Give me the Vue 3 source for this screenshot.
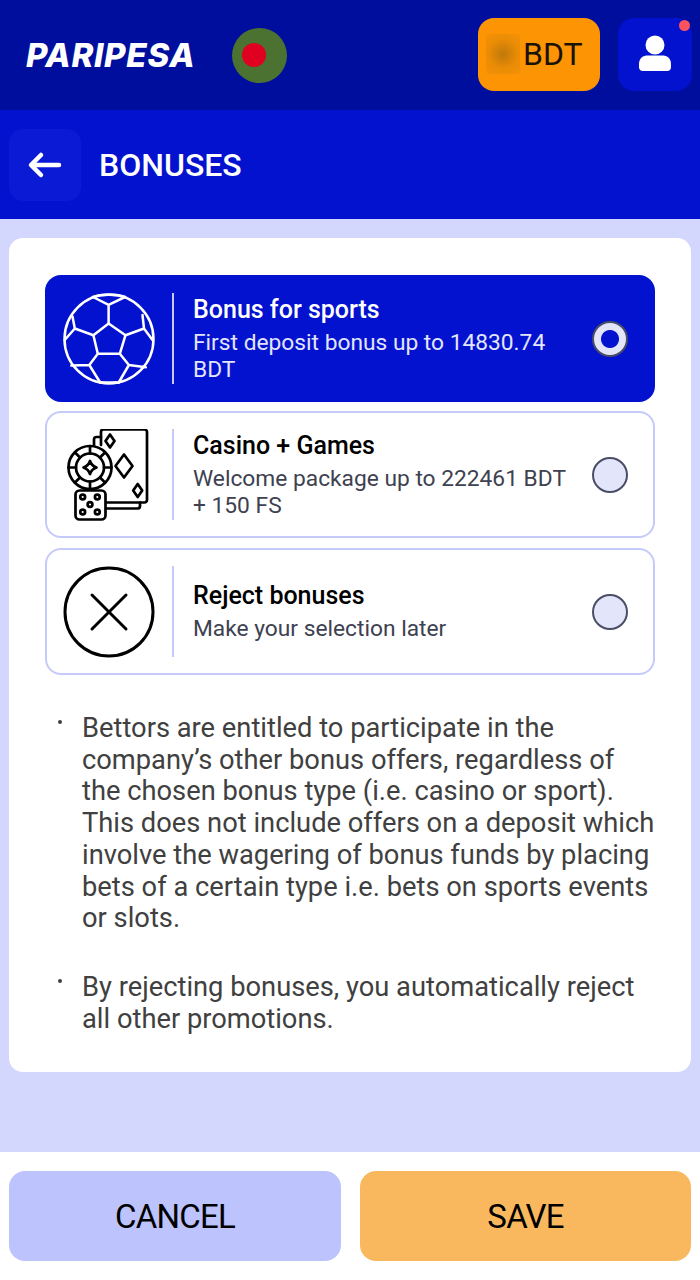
<template>
  <div class="page">
    <header class="topbar">
      <div class="brand">
        <span class="logo">PARIPESA</span>
        <span class="flag"><span class="flag-dot"></span></span>
      </div>
      <div class="top-actions">
        <button class="balance"><span class="blur"></span>BDT</button>
        <button class="user">
          <svg width="34" height="38" viewBox="0 0 34 38">
            <circle cx="17" cy="10" r="9.500" fill="#fff" />
            <path d="M1 29c0-6 4-8.500 9-8.500h14c5 0 9 2.500 9 8.500v3c0 2-1 4-4 4H5c-3 0-4-2-4-4z" fill="#fff" />
          </svg>
          <span class="notify"></span>
        </button>
      </div>
    </header>

    <div class="subbar">
      <button class="back">
        <svg width="38" height="28" viewBox="0 0 38 28" fill="none" stroke="#fff" stroke-width="4.500" stroke-linecap="round" stroke-linejoin="round">
          <path d="M33 14H6M15 4 5 14l10 10" />
        </svg>
      </button>
      <h1>BONUSES</h1>
    </div>

    <main class="content">
      <section class="card">
        <div class="options">
          <div
            v-for="option in options"
            :key="option.title"
            class="option"
            :class="{ active: option.active }"
          >
            <div class="option-icon">
              <svg v-if="option.icon === 'ball'" width="92" height="92" viewBox="0 0 92 92" fill="none" stroke="#fff" stroke-width="2.500" stroke-linejoin="round" stroke-linecap="round">
                <circle cx="46" cy="46" r="44.500" />
                <path d="M45.600 30.400 62.500 42.200 56.800 60.800H34.800L30.400 42.200Z" />
                <path d="M45.600 30.400V11.800M45.600 11.800 30 4M45.600 11.800 62 4" />
                <path d="M62.500 42.200 81 35.500M81 35.500 79.500 22M81 35.500 89.500 47" />
                <path d="M30.400 42.200 11.800 35.500M11.800 35.500 9.500 23.600M11.800 35.500 1.700 47" />
                <path d="M34.800 60.800 26.300 72M26.300 72 37.200 89.500M26.300 72 8.400 72.600" />
                <path d="M56.800 60.800 65.900 72M65.900 72 55.700 89.500M65.900 72 82.800 74.300" />
                <path d="M37.200 89.500H55.700M30 4C38 1 54 1 62 4" />
              </svg>
              <svg v-else-if="option.icon === 'casino'" width="92" height="92" viewBox="0 0 92 92" fill="none" stroke="#000" stroke-width="2.700" stroke-linejoin="round" stroke-linecap="round">
                <path d="M38 16V3a2.500 2.500 0 0 1 2.500-2.500h41a2.500 2.500 0 0 1 2.500 2.500v68a2.500 2.500 0 0 1-2.500 2.500H44" />
                <path d="M38 8h-4.500a2.500 2.500 0 0 0-2.500 2.500V17" />
                <path d="M44 79.500h30.500A2.500 2.500 0 0 0 77 77v-3.500" />
                <path d="M47 5.500l4.500 6.500-4.500 6.500-4.500-6.500zM74.700 55l4.500 6.500-4.500 6.500-4.500-6.500zM61 25.500l8.500 11.500-8.500 11.500-8.500-11.500z" />
                <circle cx="27" cy="38.500" r="21.500" />
                <circle cx="27" cy="38.500" r="14" />
                <path d="M27 17v7.500M27 52.500V60M5.500 38.500H13M41 38.500h7.500M12 23.500l5 5M42 23.500l-5 5M12 53.500l5-5M42 53.500l-5-5" />
                <path d="M27 32c1 3 3.500 5.500 6.500 6.500-3 1-5.500 3.500-6.500 6.500-1-3-3.500-5.500-6.500-6.500 3-1 5.500-3.500 6.500-6.500z" />
                <rect x="12.500" y="61.500" width="30" height="29" rx="4" fill="#fff" />
                <circle cx="19.700" cy="68" r="2.400" />
                <circle cx="34.300" cy="68" r="2.400" />
                <circle cx="27" cy="75.500" r="2.400" />
                <circle cx="19.700" cy="83" r="2.400" />
                <circle cx="34.300" cy="83" r="2.400" />
              </svg>
              <svg v-else width="92" height="92" viewBox="0 0 92 92" fill="none" stroke="#000" stroke-linecap="round">
                <circle cx="46" cy="46" r="44" stroke-width="3" />
                <path d="M29 29 63 63M63 29 29 63" stroke-width="3" />
              </svg>
            </div>
            <div class="option-text">
              <h2>{{ option.title }}</h2>
              <p>{{ option.text }}</p>
            </div>
            <span class="radio"></span>
          </div>
        </div>

        <ul class="rules">
          <li v-for="rule in rules" :key="rule">{{ rule }}</li>
        </ul>
      </section>
    </main>

    <footer class="actions">
      <button class="btn cancel">CANCEL</button>
      <button class="btn save">SAVE</button>
    </footer>
  </div>
</template>

<script setup>
const options = [
  {
    title: 'Bonus for sports',
    text: 'First deposit bonus up to 14830.74 BDT',
    icon: 'ball',
    active: true,
  },
  {
    title: 'Casino + Games',
    text: 'Welcome package up to 222461 BDT + 150 FS',
    icon: 'casino',
    active: false,
  },
  {
    title: 'Reject bonuses',
    text: 'Make your selection later',
    icon: 'reject',
    active: false,
  },
];

const rules = [
  'Bettors are entitled to participate in the company’s other bonus offers, regardless of the chosen bonus type (i.e. casino or sport). This does not include offers on a deposit which involve the wagering of bonus funds by placing bets of a certain type i.e. bets on sports events or slots.',
  'By rejecting bonuses, you automatically reject all other promotions.',
];
</script>

<style scoped>
.page {
  display: flex;
  flex-direction: column;
  height: 1280px;
  overflow: hidden;
  background: #fff;
  font-family: Roboto, "Liberation Sans", sans-serif;
}

button {
  border: none;
  font: inherit;
  padding: 0;
}

.topbar {
  display: flex;
  flex: 0 0 110px;
  align-items: center;
  justify-content: space-between;
  box-sizing: border-box;
  padding: 0 8px 2px 26px;
  background: #000e9e;
}

.brand {
  display: flex;
  align-items: center;
  gap: 36px;
  margin-top: 2px;
}

.logo {
  width: 170px;
  color: #fff;
  font-family: Inter, Roboto, sans-serif;
  font-size: 33px;
  font-style: italic;
  font-weight: 800;
  letter-spacing: 0.7px;
  line-height: 32px;
  white-space: nowrap;
}

.flag {
  display: flex;
  align-items: center;
  width: 55px;
  height: 55px;
  padding-left: 10px;
  box-sizing: border-box;
  border-radius: 50%;
  background: #4b7230;
}

.flag-dot {
  width: 24px;
  height: 24px;
  border-radius: 50%;
  background: #e0001f;
}

.top-actions {
  display: flex;
  align-items: center;
  gap: 18px;
}

.balance {
  display: flex;
  align-items: center;
  width: 122px;
  height: 73px;
  padding-left: 8px;
  border-radius: 16px;
  background: #fc9403;
  color: #1a1206;
  font-size: 32px;
}

.blur {
  width: 34px;
  height: 40px;
  margin-right: 3px;
  background: radial-gradient(circle, #c47a0a 5%, #e98c06 55%, #f69205 100%);
}

.user {
  position: relative;
  display: flex;
  align-items: center;
  justify-content: center;
  width: 74px;
  height: 73px;
  border-radius: 16px;
  background: #0212cf;
}

.notify {
  position: absolute;
  top: 2px;
  right: 2px;
  width: 11px;
  height: 11px;
  border-radius: 50%;
  background: #f9545e;
}

.subbar {
  display: flex;
  flex: 0 0 109px;
  align-items: center;
  gap: 18px;
  padding-left: 9px;
  background: #0212cf;
}

.back {
  display: flex;
  align-items: center;
  justify-content: center;
  width: 72px;
  height: 72px;
  border-radius: 14px;
  background: #0b1ad4;
}

h1 {
  margin: 0;
  color: #fff;
  font-size: 32px;
  font-weight: 500;
}

.content {
  flex: 1;
  padding: 19px 9px 0;
  background: #d3d6fd;
}

.card {
  box-sizing: border-box;
  height: 834px;
  padding: 37px 36px 0;
  border-radius: 14px;
  background: #fff;
}

.options {
  display: flex;
  flex-direction: column;
  gap: 9px;
}

.option {
  display: flex;
  align-items: center;
  box-sizing: border-box;
  height: 127px;
  padding: 0 25px 0 16px;
  border: 2px solid #c5cafa;
  border-radius: 16px;
  background: #fff;
  color: #3d4150;
}

.option:last-child {
  margin-top: 1px;
}

.option.active {
  border-color: #0212cf;
  background: #0212cf;
  color: #e3e5fd;
}

.option-icon {
  display: flex;
  align-items: center;
  height: 91px;
  padding-right: 17px;
  border-right: 2px solid #c5cafa;
}

.option-text {
  flex: 1;
  min-width: 0;
  padding-left: 19px;
}

h2 {
  margin: 0 0 4px;
  color: #000;
  font-size: 25px;
  font-weight: 500;
  line-height: 30px;
}

.active h2 {
  color: #fff;
}

.option-text p {
  margin: 0;
  font-size: 22.750px;
  line-height: 27px;
}

.radio {
  flex: none;
  box-sizing: border-box;
  width: 36px;
  height: 36px;
  margin-left: 19px;
  border: 2px solid #4a4d66;
  border-radius: 50%;
  background: #e3e5fb;
}

.active .radio {
  background: radial-gradient(circle, #0212cf 0 8.500px, #e3e5fb 9.500px);
}

.rules {
  margin: 38px 0 0;
  padding: 0 0 0 37px;
  color: #404040;
  font-size: 27.300px;
  line-height: 31.700px;
  list-style: none;
}

.rules li {
  position: relative;
  margin-bottom: 37px;
}

.rules li::before {
  content: "";
  position: absolute;
  top: 7px;
  left: -24px;
  width: 4px;
  height: 4px;
  border-radius: 50%;
  background: #404040;
}

.actions {
  display: grid;
  flex: 0 0 128px;
  grid-template-columns: 332px 331px;
  justify-content: space-between;
  box-sizing: border-box;
  padding: 19px 9px 19px;
  background: #fff;
}

.btn {
  border-radius: 16px;
  color: #000;
  font-size: 33px;
  letter-spacing: -0.800px;
}

.cancel {
  background: #bcc3fd;
}

.save {
  background: #f9b85e;
}
</style>
